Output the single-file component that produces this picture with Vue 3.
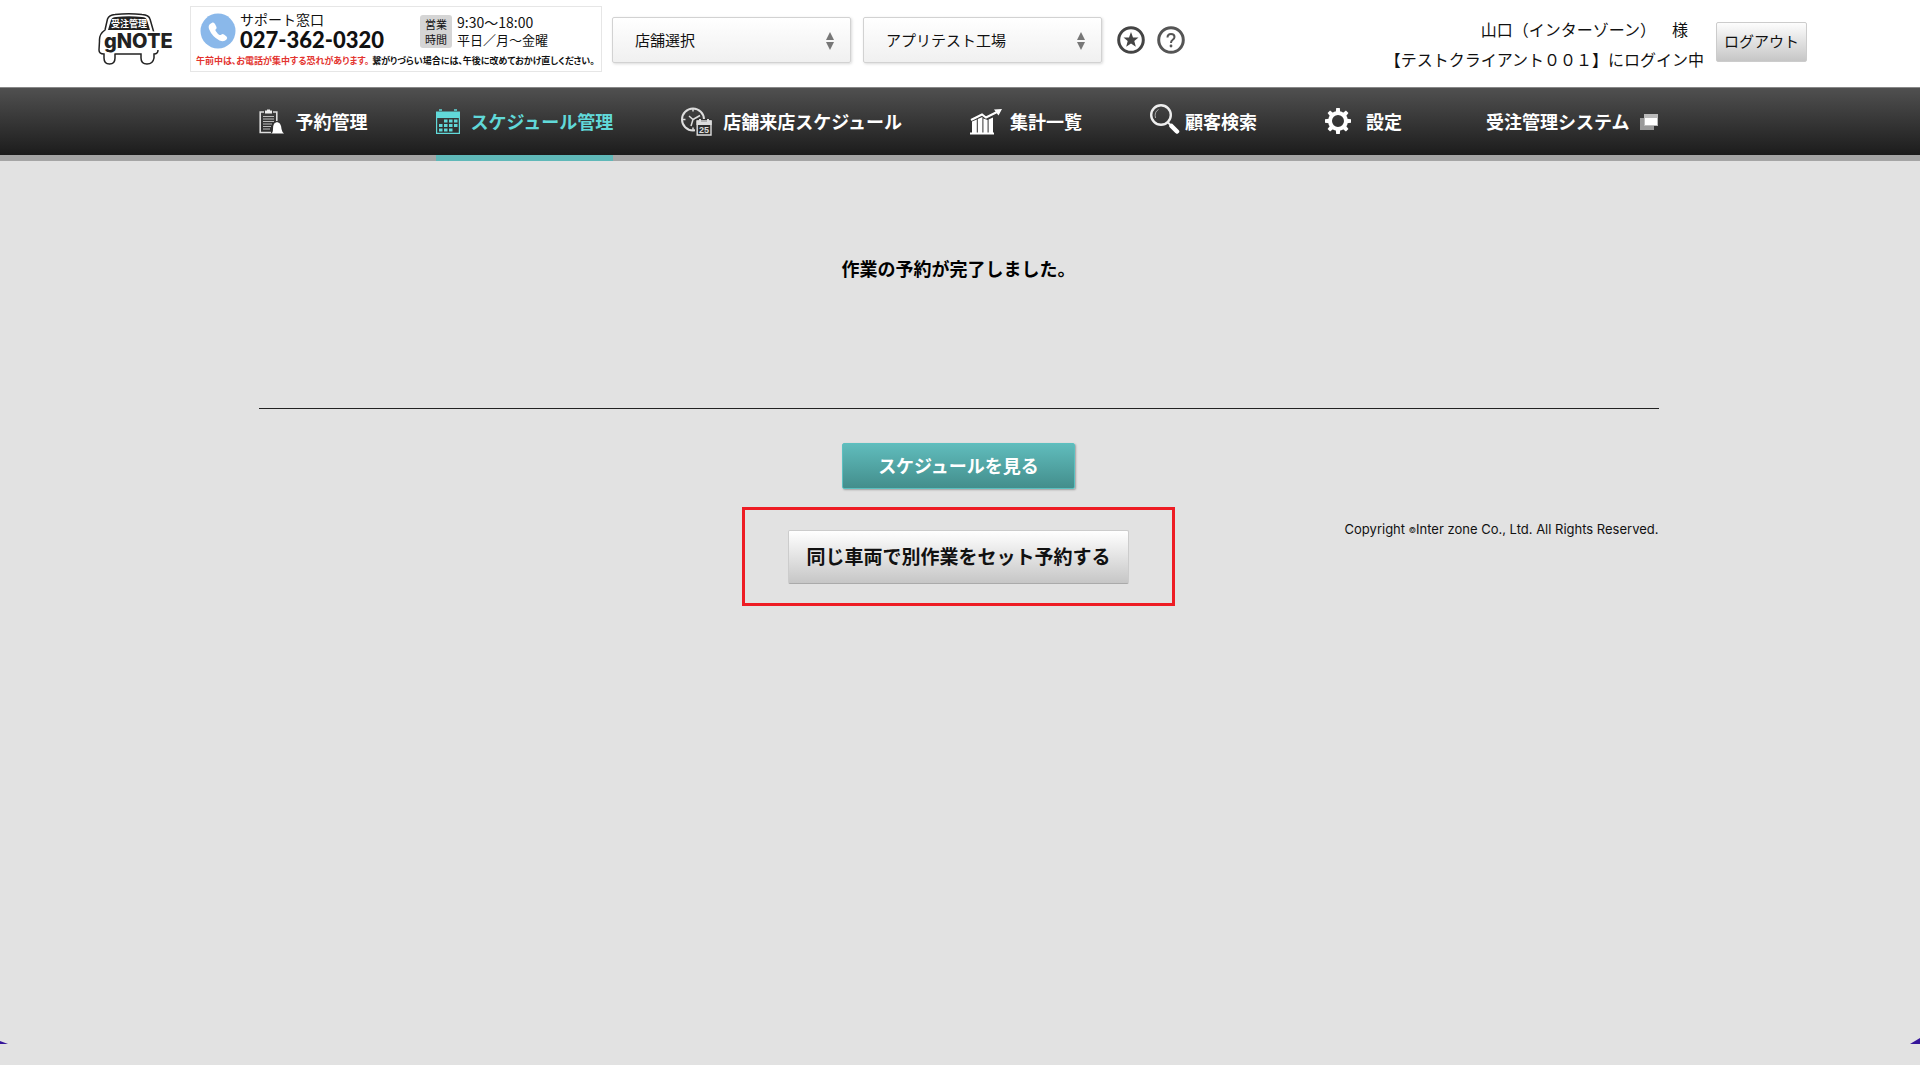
<script setup>
import { ref } from 'vue'

const selects = [
  { id: 'store', label: '店舗', value: '店舗選択' },
  { id: 'factory', label: '工場', value: 'アプリテスト工場' },
]

const navItems = [
  { label: '予約管理', icon: 'clipboard' },
  { label: 'スケジュール管理', icon: 'calendar' },
  { label: '店舗来店スケジュール', icon: 'clock' },
  { label: '集計一覧', icon: 'chart' },
  { label: '顧客検索', icon: 'search' },
  { label: '設定', icon: 'gear' },
  { label: '受注管理システム', icon: 'window' },
]
const active = ref('calendar')
</script>

<template>
  <div class="page">
    <header class="header">
      <a href="#" class="logo" aria-label="受注管理 gNOTE">
        <svg width="78" height="52" viewBox="0 0 78 52">
          <g fill="none" stroke="#222" stroke-width="1.5">
            <path d="M56 20 L52 6 Q51 2 44 1.500 Q31 0 17 1.500 Q11 2 9.500 6 L7 17 Q1 21 1.500 28 L1 37 Q1 41 6 41 L6 45 Q6 51 11.500 51 Q17 51 17 45 L17 41 L43 41 L43 45 Q43 51 49 51 Q55 51 56 45 L56 41 Q60 41 60 37" />
          </g>
          <path d="M10 17 L13 7 Q14 4 18 4 Q31 2.500 44 4 Q48 4 49 7 L52 17 Z" fill="#222" />
          <text x="31" y="14" class="logo-sub" text-anchor="middle">受注管理</text>
          <text x="6" y="35" class="logo-name">gNOTE</text>
        </svg>
      </a>

      <section class="support">
        <div class="support-main">
          <svg class="phone" width="36" height="36" viewBox="0 0 36 36">
            <circle cx="18" cy="18" r="17.500" fill="#8ab8ea" />
            <path d="M10 11 L12.500 9.500 Q14 9 15 11 L16.500 14 Q17 15.500 15.500 16.500 Q15 17.500 16.500 19 Q18 21.500 19.500 22 Q21 22 21.500 21.500 Q22.500 20.500 24 21.500 L26.500 23.500 Q28 25 26.500 26.500 Q24 29.500 19.500 27.500 Q12 23.500 9 16 Q8 12.500 10 11 Z" fill="#fff" />
          </svg>
          <div class="tel">
            <span class="tel-label">サポート窓口</span>
            <strong class="tel-number">027-362-0320</strong>
          </div>
          <div class="badge"><span>営業</span><span>時間</span></div>
          <div class="hours"><span>9:30～18:00</span><span class="days">平日／月～金曜</span></div>
        </div>
        <p class="notice"><em>午前中は、お電話が集中する恐れがあります。</em>繋がりづらい場合には、午後に改めておかけ直しください。</p>
      </section>

      <div class="selects">
        <div v-for="s in selects" :key="s.id" class="select">
          <select :id="s.id" :aria-label="s.label">
            <option>{{ s.value }}</option>
          </select>
          <svg class="arrows" width="8" height="18" viewBox="0 0 8 18">
            <path d="M4 0 L8 8 H0 Z M4 18 L0 10 H8 Z" fill="#777" />
          </svg>
        </div>
      </div>

      <div class="round-links">
        <a href="#" aria-label="お気に入り">
          <svg width="28" height="28" viewBox="0 0 28 28">
            <circle cx="14" cy="14" r="12.300" fill="#fff" stroke="#444" stroke-width="3" />
            <path d="M14 6 L16 11.500 L21.500 11.600 L17.300 15.100 L18.800 20.800 L14 17.600 L9.200 20.800 L10.700 15.100 L6.500 11.600 L12 11.500 Z" fill="#444" />
          </svg>
        </a>
        <a href="#" aria-label="ヘルプ">
          <svg width="28" height="28" viewBox="0 0 28 28">
            <circle cx="14" cy="14" r="12.300" fill="#fff" stroke="#555" stroke-width="3" />
            <path d="M10.500 11.500 Q10.500 8 14 8 Q17.500 8 17.500 11 Q17.500 12.700 15.500 14 Q14 15 14 17" fill="none" stroke="#555" stroke-width="2" />
            <circle cx="14" cy="20" r="1.400" fill="#555" />
          </svg>
        </a>
      </div>

      <div class="user">
        <p class="user-name">山口（インターゾーン）　様</p>
        <p>【テストクライアント００１】にログイン中</p>
      </div>
      <button type="button" class="logout">ログアウト</button>
    </header>

    <nav class="nav">
      <ul>
        <li v-for="item in navItems" :key="item.icon">
          <a href="#" :class="[item.icon, { active: active === item.icon }]" @click.prevent="active = item.icon">
            <svg v-if="item.icon === 'clipboard'" width="26" height="26" viewBox="0 0 26 26">
              <path d="M5 3 H1.200 V23.500 H12 M14 3 H17.800 V12" fill="none" stroke="#ddd" stroke-width="1.600" />
              <path d="M6 1.500 H8 V.500 H11 V1.500 H13 V4.500 H6 Z" fill="#eee" />
              <path d="M4 7.500 H15 M4 10 H15 M4 12.500 H15 M4 15 H13 M4 17.500 H12 M4 20 H11" stroke="#bbb" stroke-width="1.200" />
              <path d="M12 24.500 Q14 24 14 20 Q14 14 17 13.500 Q18 12.500 19 13.500 Q22 14 22.500 20 Q23 23 25 24.500 Z" fill="#fff" />
            </svg>
            <svg v-else-if="item.icon === 'calendar'" width="24" height="26" viewBox="0 0 24 26">
              <path d="M3 1 H6 M18 1 H21" stroke="#61d9d9" stroke-width="1.400" />
              <path d="M0 2.500 H24 V9 H0 Z" fill="#61d9d9" />
              <path d="M.600 9 V24.400 H23.400 V9" fill="none" stroke="#61d9d9" stroke-width="1.200" />
              <path d="M8 12 H22 M3 16.500 H22 M3 21 H16.500" stroke="#61d9d9" stroke-width="3" stroke-dasharray="3.500 1.500" />
            </svg>
            <svg v-else-if="item.icon === 'clock'" width="31" height="29" viewBox="0 0 31 29">
              <circle cx="12" cy="12.500" r="11" fill="none" stroke="#ddd" stroke-width="2" />
              <path d="M8 9 L12 12.500 L19 8.500 M12 12.500 L10 19 M12 2 V4.500 M2 12.500 H4.500 M12 20.500 V23" fill="none" stroke="#ddd" stroke-width="1.500" />
              <path d="M14 12 H31 V29 H14 Z" fill="#2e2e2e" />
              <path d="M16.200 14 H30 V28 H16.200 Z" fill="none" stroke="#ddd" stroke-width="1.400" />
              <path d="M15.500 13.500 H18 V12 H20 V15 H26 V12 H28 V13.500 H30.700 V18 H15.500 Z" fill="#ddd" />
              <text x="23" y="26" text-anchor="middle" class="date">25</text>
            </svg>
            <svg v-else-if="item.icon === 'chart'" width="32" height="26" viewBox="0 0 32 26">
              <path d="M1 11 L12 5.500 L16 8.500 L28 2.500" fill="none" stroke="#fff" stroke-width="2" />
              <path d="M24 .500 L32 0 L28.500 6.500 Z" fill="#fff" />
              <path d="M2 12.500 L6.800 10.500 V24 H2 Z M7.800 10 L12.400 8 V24 H7.800 Z M13.400 9.500 L17.600 11 V24 H13.400 Z M18.600 10.500 L23 8.500 V24 H18.600 Z M0 23.500 H24 V25.500 H0 Z" fill="#fff" />
            </svg>
            <svg v-else-if="item.icon === 'search'" width="30" height="32" viewBox="0 0 30 32">
              <circle cx="11" cy="11" r="9.800" fill="none" stroke="#eee" stroke-width="2.400" />
              <path d="M5.500 14 Q4 8 8.500 5.500" fill="none" stroke="#aaa" stroke-width="1" />
              <path d="M17.500 18 L21 21.500" stroke="#eee" stroke-width="2" />
              <path d="M21.500 22 L27 27.500" stroke="#fff" stroke-width="4.500" stroke-linecap="round" />
            </svg>
            <svg v-else-if="item.icon === 'gear'" width="26" height="26" viewBox="0 0 26 26">
              <circle cx="13" cy="13" r="8" fill="none" stroke="#fff" stroke-width="4" />
              <path v-for="n in 8" :key="n" d="M10.800 4 L11.200 0 H14.800 L15.200 4 Z" fill="#fff" :transform="`rotate(${n * 45} 13 13)`" />
            </svg>
            <span>{{ item.label }}</span>
            <svg v-if="item.icon === 'window'" width="18" height="16" viewBox="0 0 18 16">
              <path d="M0 4 H14 V16 H0 Z" fill="#999" />
              <path d="M4 0 H18 V12 H4 Z" fill="#bbb" />
              <path d="M5 4 H17 V11 H5 Z" fill="#fff" />
            </svg>
          </a>
        </li>
      </ul>
    </nav>

    <main class="main">
      <h1>作業の予約が完了しました。</h1>
      <hr />
      <div class="actions">
        <div class="buttons">
          <button type="button" class="primary">スケジュールを見る</button>
          <div class="highlight">
            <button type="button" class="secondary">同じ車両で別作業をセット予約する</button>
          </div>
        </div>
        <footer class="copyright">Copyright <small>©</small>Inter zone Co., Ltd. All Rights Reserved.</footer>
      </div>
    </main>

    <div class="corners"><span class="corner-left"></span><span class="corner-right"></span></div>
  </div>
</template>

<style>
body {
  margin: 0;
  background: #e2e2e2;
}
</style>

<style scoped>
.page {
  display: flex;
  flex-direction: column;
  min-height: 100vh;
  color: #111;
  font-family: "Noto Sans CJK JP", sans-serif;
  text-spacing-trim: space-all;
}
p, h1, ul {
  margin: 0;
  padding: 0;
}
a {
  color: inherit;
  text-decoration: none;
}
button, select {
  font-family: inherit;
  color: inherit;
}
svg {
  display: block;
  flex: none;
}
.header {
  display: flex;
  align-items: flex-start;
  height: 87px;
  padding: 0 113px 0 98px;
  background: #fff;
  box-sizing: border-box;
  white-space: nowrap;
}
.logo {
  margin: 13px 14px 0 0;
}
.logo-sub {
  font-size: 9px;
  font-weight: bold;
  fill: #fff;
}
.logo-name {
  font: 800 20px Inter, sans-serif;
  fill: #222;
  stroke: #fff;
  stroke-width: 3px;
  paint-order: stroke;
}
.support {
  width: 412px;
  height: 66px;
  margin: 6px 10px 0 0;
  border: 1px solid #e6e6e6;
  box-sizing: border-box;
}
.support-main {
  display: flex;
  height: 45px;
  padding: 0 9px;
}
.phone {
  margin: 6px 4px 0 0;
}
.tel {
  display: flex;
  flex-direction: column;
  width: 180px;
  padding-top: 3px;
}
.tel-label {
  font-size: 14px;
  line-height: 18px;
}
.tel-number {
  font: 900 22px/24px Lato, sans-serif;
}
.badge {
  display: flex;
  flex-direction: column;
  justify-content: center;
  align-items: center;
  width: 32px;
  height: 33px;
  margin: 8px 5px 0 0;
  border-radius: 3px;
  background: #d5d5d5;
  font-size: 11px;
  line-height: 15px;
}
.hours {
  display: flex;
  flex-direction: column;
  padding-top: 7px;
  font-size: 14px;
  line-height: 17px;
}
.days {
  font-size: 13px;
}
.notice {
  padding-left: 5px;
  font-size: 9px;
  font-weight: bold;
  line-height: 18px;
  font-feature-settings: "palt";
}
.notice em {
  margin-right: 3px;
  color: #e3342f;
  font-style: normal;
}
.selects {
  display: flex;
  gap: 12px;
  margin: 17px 15px 0 0;
}
.select {
  position: relative;
  width: 239px;
}
.select select {
  width: 100%;
  height: 46px;
  padding: 0 22px 2px;
  border: 1px solid #d2d2d2;
  border-radius: 2px;
  background: linear-gradient(#fff, #f0f0f0);
  box-shadow: 1px 1px 3px rgba(0, 0, 0, .15);
  font-size: 15px;
  appearance: none;
}
.arrows {
  position: absolute;
  top: 15px;
  right: 17px;
  pointer-events: none;
}
.round-links {
  display: flex;
  gap: 12px;
  margin-top: 26px;
}
.user {
  margin: 14px 12px 0 auto;
  font-size: 16px;
  line-height: 30px;
  text-align: right;
}
.user-name {
  padding-right: 16px;
}
.logout {
  width: 91px;
  height: 40px;
  margin-top: 22px;
  padding: 0 0 4px;
  border: 1px solid #ccc;
  border-radius: 2px;
  background: linear-gradient(#fdfdfd, #c6c6c6);
  font-size: 15px;
}
.nav {
  border-top: 1px solid #888;
  border-bottom: 6px solid #a5a5a5;
  background: linear-gradient(#505050, #1c1c1c) padding-box;
  color: #fff;
}
.nav ul {
  display: flex;
  justify-content: space-between;
  max-width: 1400px;
  height: 67px;
  margin: 0 auto;
  padding-right: 3px;
  list-style: none;
}
.nav a {
  display: flex;
  align-items: center;
  gap: 11px;
  height: 67px;
  font-size: 18px;
  font-weight: bold;
  white-space: nowrap;
}
.nav a span {
  padding-bottom: 2px;
}
.nav a.active {
  border-bottom: 6px solid #5fb8b8;
  color: #61d9d9;
}
.nav a.chart {
  gap: 8px;
}
.nav a.search {
  gap: 5px;
}
.nav a.search svg {
  margin-bottom: 3px;
}
.nav a.gear {
  gap: 15px;
}
.nav a.gear svg {
  margin-bottom: 2px;
}
.nav a.window {
  padding-left: 16px;
}
.date {
  font: bold 9px "Liberation Sans", sans-serif;
  fill: #ddd;
}
.main {
  width: 100%;
  max-width: 1400px;
  margin: 0 auto;
  padding-right: 3px;
}
h1 {
  padding-top: 93px;
  font-size: 18px;
  line-height: 28px;
  text-align: center;
  color: #000;
}
hr {
  margin: 126px 0 34px;
  border: 0;
  border-top: 1px solid #222;
}
.actions {
  display: grid;
  grid-template-columns: 1fr auto 1fr;
}
.buttons {
  display: flex;
  flex-direction: column;
  align-items: center;
  grid-column: 2;
}
.primary {
  width: 233px;
  height: 46px;
  padding: 0 0 3px;
  border: 1px solid #5cc0c0;
  border-radius: 2px;
  background: linear-gradient(#60bcbc, #438e8c);
  box-shadow: 1px 1px 2px rgba(0, 0, 0, .3);
  color: #fff;
  font-size: 18px;
  font-weight: bold;
}
.highlight {
  margin-top: 18px;
  padding: 20px 43px 19px;
  border: 3px solid #ee1c24;
}
.secondary {
  display: block;
  width: 341px;
  height: 54px;
  padding: 0 0 4px;
  border: 1px solid #ccc;
  border-bottom-color: #aaa;
  border-radius: 2px;
  background: linear-gradient(#fff, #c6c6c6);
  font-size: 19px;
  font-weight: bold;
}
.copyright {
  padding-top: 77px;
  font-family: Inter, sans-serif;
  font-size: 13px;
  line-height: 18px;
  text-align: right;
}
.copyright small {
  font-size: 8px;
  vertical-align: 1px;
}
.corners {
  display: flex;
  justify-content: space-between;
  align-items: flex-end;
  margin: auto 0 21px;
}
.corners span {
  background: #35159a;
}
.corner-left {
  width: 8px;
  height: 3px;
  clip-path: polygon(0 0, 100% 100%, 0 100%);
}
.corner-right {
  width: 10px;
  height: 6px;
  clip-path: polygon(100% 0, 100% 100%, 0 100%);
}
</style>
